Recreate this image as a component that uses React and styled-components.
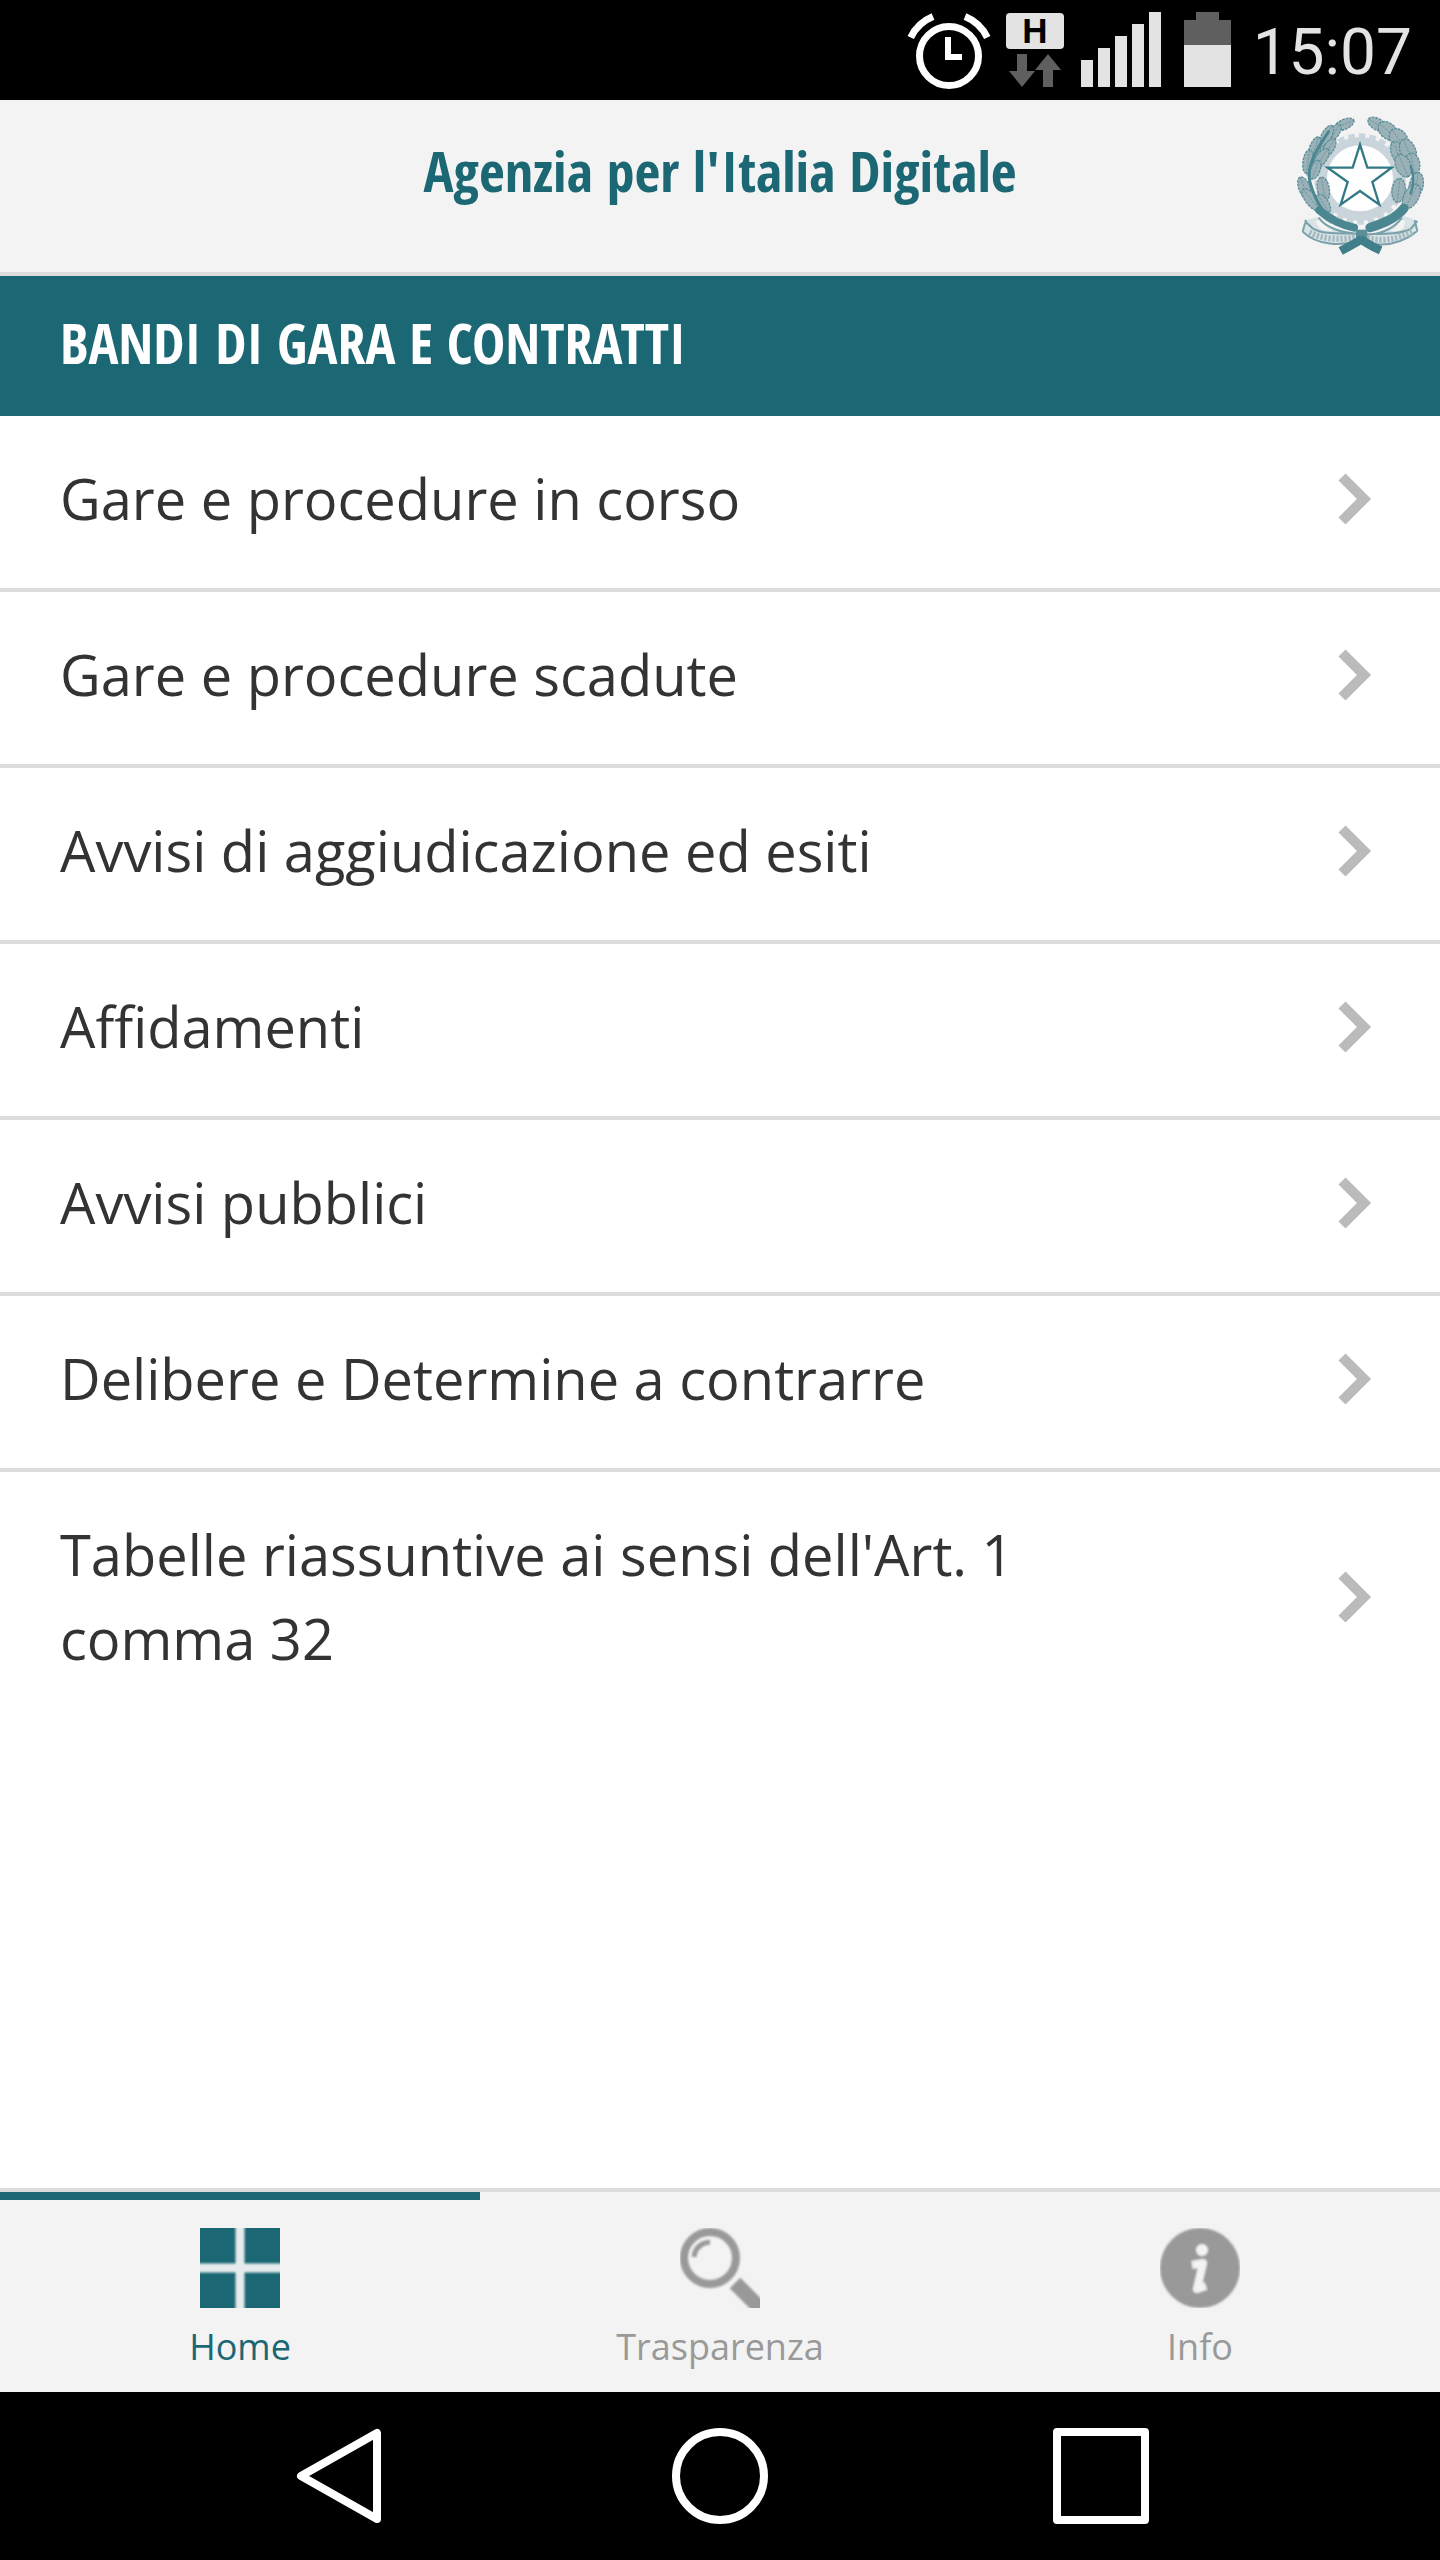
import React from 'react';
import styled, { createGlobalStyle } from 'styled-components';

const colors = {
  teal: '#1b6774',
  bar: '#f3f3f3',
  line: '#dcdcdc',
  text: '#333333',
  muted: '#999999',
  chevron: '#bbbbbb',
  status: '#e3e3e3',
  statusDim: '#5f5f5f',
};

const sections = [
  'Gare e procedure in corso',
  'Gare e procedure scadute',
  'Avvisi di aggiudicazione ed esiti',
  'Affidamenti',
  'Avvisi pubblici',
  'Delibere e Determine a contrarre',
  "Tabelle riassuntive ai sensi dell'Art. 1 comma 32",
];

// leaves of the emblem: cx, cy, rx, ry, rotation
const laurel = [
  [193, 88, 31, 15, -24],
  [164, 112, 28, 14, -58],
  [140, 122, 34, 15, -62],
  [146, 160, 34, 15, -58],
  [104, 162, 38, 16, -72],
  [124, 190, 34, 16, -55],
  [84, 200, 36, 15, 98],
  [106, 224, 30, 14, -70],
  [74, 280, 36, 17, 68],
  [130, 282, 36, 18, 80],
  [94, 314, 40, 17, 52],
  [130, 326, 32, 16, 58],
];

const oak = [
  [292, 88, 31, 17, 30],
  [324, 108, 34, 23, 42],
  [356, 132, 34, 25, 55],
  [352, 172, 34, 18, 72],
  [384, 168, 38, 23, 68],
  [398, 206, 32, 21, 78],
  [370, 212, 36, 22, 66],
  [410, 268, 36, 20, 98],
  [356, 286, 36, 20, 96],
  [394, 304, 40, 22, 118],
];

const AlarmIcon = () => (
  <svg width="86" height="88" viewBox="907 9 86 88" fill="none" stroke="#fff" strokeWidth="7" aria-hidden="true">
    <circle cx="950" cy="56" r="29.5" />
    <path d="M949 37V57H963" strokeWidth="6" />
    <path d="M911.7 37.6A42.5 42.5 0 0 1 934 16.6M988.3 37.6A42.5 42.5 0 0 0 966 16.6" />
  </svg>
);

const NetworkIcon = () => (
  <svg width="61" height="88" viewBox="1007 9 61 88" aria-hidden="true">
    <rect x="1007" y="13" width="58" height="36" rx="4" fill={colors.status} />
    <text x="1036" y="43" textAnchor="middle" fontFamily="Liberation Sans, sans-serif" fontWeight="700" fontSize="35">
      H
    </text>
    <path d="M1018 54h10v17h8l-13 16-13-16h8zM1044 87h10V70h8l-13-16-13 16h8z" fill={colors.statusDim} />
  </svg>
);

const SignalIcon = () => (
  <svg width="89" height="88" viewBox="1082 9 89 88" fill={colors.status} aria-hidden="true">
    <path d="M1082 60h12v27h-12zM1099 48h12v39h-12zM1116 36h12v51h-12zM1133 24h12v63h-12zM1150 12h12v75h-12z" />
  </svg>
);

const BatteryIcon = () => (
  <svg width="55" height="88" viewBox="1185 9 55 88" aria-hidden="true">
    <path d="M1197 12h23v8h12v25h-47V20h12z" fill={colors.statusDim} />
    <path d="M1185 45h47v42h-47z" fill={colors.status} />
  </svg>
);

const Leaf = ({ leaf: [cx, cy, rx, ry, turn] }) => (
  <g transform={`translate(${cx} ${cy}) rotate(${turn})`}>
    <ellipse rx={rx} ry={ry} />
    <path d={`M${-rx} 0H${rx}`} strokeWidth="2" />
  </g>
);

const Emblem = () => (
  <svg width="128" height="142" viewBox="48 60 384 426" role="img" aria-label="Repubblica Italiana">
    <defs>
      <filter id="soft" x="-5%" y="-5%" width="110%" height="110%">
        <feGaussianBlur stdDeviation="2" />
      </filter>
    </defs>
    <g filter="url(#soft)">
      <circle cx="240" cy="252" r="130" fill="none" stroke="#c9d5da" strokeWidth="14" strokeDasharray="20 12" />
      <circle cx="240" cy="252" r="126" fill="#c9d5da" />
      <circle cx="240" cy="250" r="99" fill="#fff" />
      <g fill="none" stroke="#9bb1b8" strokeWidth="26">
        <path d="M160 108C110 150 84 200 92 240M82 262C84 310 116 350 160 376" />
        <path d="M330 108C366 140 380 180 388 214M400 262C396 310 374 350 326 376" />
      </g>
      <g fill="#9bb1b8" stroke="#5b8f98" strokeWidth="4" strokeDasharray="8 3">
        {laurel.map((leaf, i) => (
          <Leaf key={i} leaf={leaf} />
        ))}
        {oak.map((leaf, i) => (
          <Leaf key={i} leaf={leaf} />
        ))}
      </g>
      <g fill="none" stroke="#4b8790" strokeLinecap="round">
        <path d="M146 110C104 170 78 220 90 262S126 352 160 376" strokeWidth="9" />
        <path d="M118 346C146 370 182 390 222 398" strokeWidth="24" />
        <path d="M392 214C402 240 402 270 392 296" strokeWidth="7" />
        <path d="M372 340C346 372 306 386 270 398" strokeWidth="28" />
      </g>
      <path
        d="M116 366C140 402 186 414 240 420S342 402 370 362L412 376L404 420C360 450 300 452 240 436C180 454 112 450 68 412L76 376Z"
        fill="#d9e2e5"
      />
      <path d="M122 374C132 392 146 400 160 404C146 410 132 408 118 400L106 378Z" fill="#f3f3f3" />
      <path d="M362 374C354 392 344 402 330 406C344 412 358 408 370 400L376 378Z" fill="#f3f3f3" />
      <path
        d="M116 368C140 402 186 412 240 418S342 402 366 368M74 378L98 400C130 420 186 414 232 416M412 378L392 402C352 420 300 416 252 418M68 410C110 452 184 454 240 438C300 458 360 450 412 408M68 410L78 374M412 408L404 376"
        fill="none"
        stroke="#79a1a9"
        strokeWidth="6"
      />
      <path
        d="M88 412C130 434 180 434 226 428M262 430C310 440 350 434 396 410"
        fill="none"
        stroke="#a3bac0"
        strokeWidth="18"
        strokeDasharray="7 5"
      />
      <path d="M228 404h34v36h-34z" fill="#5c8f98" />
      <path d="M246 432C228 444 204 456 182 468M240 430C260 446 280 456 302 466" fill="none" stroke="#407f89" strokeWidth="26" />
      <path
        d="M240 149L262 218H335L277 261L298 329L240 288L182 329L203 261L143 218H218Z"
        fill="#fff"
        stroke="#337a85"
        strokeWidth="7"
      />
    </g>
  </svg>
);

const Chevron = () => (
  <svg width="34" height="52" viewBox="0 0 34 52" fill="none" stroke={colors.chevron} strokeWidth="10" aria-hidden="true">
    <path d="M4 5L26 27L4 49" />
  </svg>
);

const HomeIcon = () => (
  <svg width="80" height="80" viewBox="0 0 80 80" aria-hidden="true">
    <path d="M0 0h80v80H0z" fill={colors.teal} />
    <path d="M40 -10V90M-10 40H90" stroke="#e6ecee" strokeWidth="9" filter="url(#blur)" />
  </svg>
);

const SearchIcon = () => (
  <svg width="80" height="80" viewBox="0 0 80 80" fill="none" stroke={colors.muted} aria-hidden="true">
    <filter id="blur">
      <feGaussianBlur stdDeviation="1" />
    </filter>
    <g filter="url(#blur)">
      <circle cx="30" cy="30" r="26" strokeWidth="8" />
      <path d="M14 29C15 20 21 15 30 14" strokeWidth="5" />
      <path d="M55 55L84 84" strokeWidth="15" />
    </g>
  </svg>
);

const InfoIcon = () => (
  <svg width="80" height="80" viewBox="0 0 80 80" aria-hidden="true">
    <g filter="url(#blur)">
      <circle cx="40" cy="40" r="40" fill={colors.muted} />
      <circle cx="42" cy="22" r="6" fill={colors.bar} />
      <path d="M32 37L43 35L37 61L46 58" fill="none" stroke={colors.bar} strokeWidth="8" strokeLinejoin="round" />
    </g>
  </svg>
);

const tabs = [
  { label: 'Home', icon: HomeIcon, active: true },
  { label: 'Trasparenza', icon: SearchIcon },
  { label: 'Info', icon: InfoIcon },
];

const App = () => {
  return (
    <Page>
      <GlobalStyle />
      <StatusBar>
        <AlarmIcon />
        <NetworkIcon />
        <SignalIcon />
        <BatteryIcon />
        <Clock>15:07</Clock>
      </StatusBar>
      <Header>
        <Title>Agenzia per l'Italia Digitale</Title>
        <EmblemSlot>
          <Emblem />
        </EmblemSlot>
      </Header>
      <Main>
        <SectionTitle>Bandi di gara e contratti</SectionTitle>
        <List>
          {sections.map((name) => (
            <Row key={name}>
              <RowLink href="#">
                <RowText>{name}</RowText>
                <Chevron />
              </RowLink>
            </Row>
          ))}
        </List>
      </Main>
      <TabBar>
        {tabs.map(({ label, icon: Icon, active }) => (
          <Tab key={label} href="#" $active={active}>
            <Icon />
            <span>{label}</span>
          </Tab>
        ))}
      </TabBar>
      <SystemBar>
        <SystemButton aria-label="Back">
          <svg width="96" height="96" viewBox="0 0 96 96">
            <path d="M86 5V91L10 48Z" />
          </svg>
        </SystemButton>
        <SystemButton aria-label="Home screen">
          <svg width="96" height="96" viewBox="0 0 96 96">
            <circle cx="48" cy="48" r="44" />
          </svg>
        </SystemButton>
        <SystemButton aria-label="Recent apps">
          <svg width="96" height="96" viewBox="0 0 96 96">
            <path d="M4 4H92V92H4Z" />
          </svg>
        </SystemButton>
      </SystemBar>
    </Page>
  );
};

const GlobalStyle = createGlobalStyle`
  * {
    box-sizing: border-box;
  }
  body {
    margin: 0;
    background: #fff;
    font-family: 'Open Sans', sans-serif;
  }
  svg {
    display: block;
    flex-shrink: 0;
  }
`;

const Page = styled.div`
  min-height: 100vh;
  display: flex;
  flex-direction: column;
  color: ${colors.text};
`;

const StatusBar = styled.div`
  display: flex;
  justify-content: flex-end;
  align-items: center;
  gap: 14px;
  height: 100px;
  padding: 6px 28px 0 0;
  background: #000;
`;

const Clock = styled.time`
  color: ${colors.status};
  font-family: Roboto, sans-serif;
  font-size: 64px;
  line-height: 84px;
`;

const Header = styled.header`
  display: grid;
  grid-template-columns: 1fr auto 1fr;
  align-items: center;
  padding: 0 16px;
  min-height: 176px;
  background: ${colors.bar};
  border-bottom: 4px solid ${colors.line};
`;

const Title = styled.h1`
  grid-column: 2;
  align-self: start;
  margin: 0;
  padding-top: 28px;
  color: ${colors.teal};
  font-family: 'Open Sans Condensed', 'Liberation Sans Narrow', 'Open Sans', sans-serif;
  font-size: 56px;
  font-weight: 700;
  line-height: 84px;
`;

const EmblemSlot = styled.div`
  justify-self: end;
`;

const Main = styled.main`
  flex: 1;
`;

const SectionTitle = styled.h2`
  margin: 0;
  padding: 24px 60px 32px;
  background: ${colors.teal};
  color: #fff;
  font-family: 'Open Sans Condensed', 'Liberation Sans Narrow', 'Open Sans', sans-serif;
  font-size: 56px;
  font-weight: 700;
  line-height: 84px;
  text-transform: uppercase;
`;

const List = styled.ul`
  margin: 0;
  padding: 0;
  list-style: none;
`;

const Row = styled.li`
  border-bottom: 4px solid ${colors.line};
  &:last-child {
    border-bottom: none;
  }
`;

const RowLink = styled.a`
  display: flex;
  align-items: center;
  justify-content: space-between;
  padding: 40px 68px 48px 60px;
  color: inherit;
  text-decoration: none;
`;

const RowText = styled.span`
  max-width: 75%;
  font-size: 56px;
  line-height: 84px;
`;

const TabBar = styled.nav`
  display: grid;
  grid-template-columns: repeat(3, 1fr);
  background: ${colors.bar};
  border-top: 4px solid ${colors.line};
`;

const Tab = styled.a`
  display: flex;
  flex-direction: column;
  align-items: center;
  gap: 12px;
  padding: 28px 0 18px;
  border-top: 8px solid ${(props) => (props.$active ? colors.teal : 'transparent')};
  color: ${(props) => (props.$active ? colors.teal : colors.muted)};
  font-size: 36px;
  line-height: 54px;
  text-decoration: none;
`;

const SystemBar = styled.div`
  display: flex;
  justify-content: center;
  align-items: center;
  gap: 285px;
  height: 168px;
  background: #000;
`;

const SystemButton = styled.button`
  padding: 0;
  border: none;
  background: none;
  fill: none;
  stroke: #fff;
  stroke-width: 8px;
  stroke-linejoin: round;
`;

export default App;
